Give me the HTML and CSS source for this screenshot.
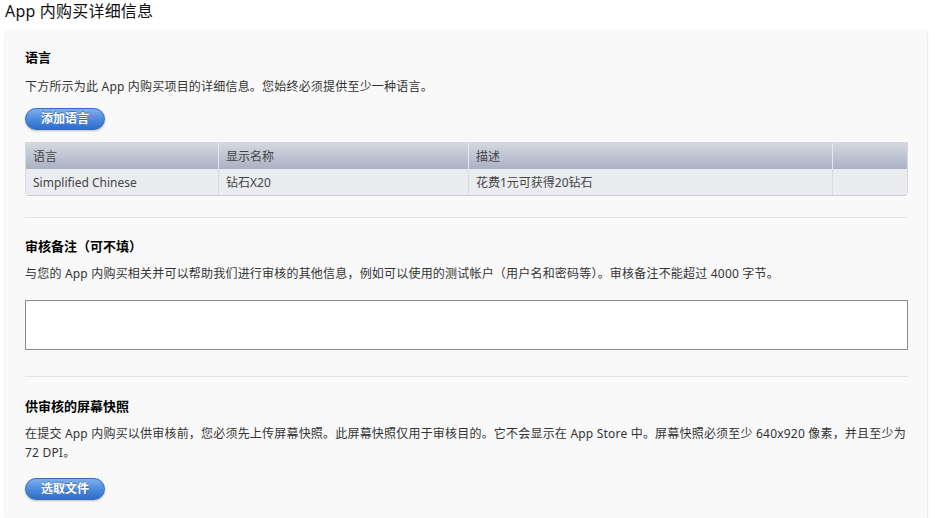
FILE: index.html
```html
<!DOCTYPE html>
<html lang="zh-CN">
<head>
  <meta charset="UTF-8">
  <title>App 内购买详细信息</title>
  <link rel="stylesheet" href="styles.css">
</head>
<body>
  <h1 class="page-title">App 内购买详细信息</h1>
  <div class="panel">
    <div class="section section-lang">
      <h2>语言</h2>
      <p class="desc">下方所示为此 App 内购买项目的详细信息。您始终必须提供至少一种语言。</p>
      <button class="btn">添加语言</button>
      <table class="lang-table">
        <thead>
          <tr>
            <th class="col-lang">语言</th>
            <th class="col-name">显示名称</th>
            <th class="col-desc">描述</th>
            <th class="col-edit"></th>
          </tr>
        </thead>
        <tbody>
          <tr>
            <td>Simplified Chinese</td>
            <td>钻石X20</td>
            <td>花费1元可获得20钻石</td>
            <td></td>
          </tr>
        </tbody>
      </table>
    </div>
    <div class="section section-notes">
      <h2>审核备注（可不填）</h2>
      <p class="desc">与您的 App 内购买相关并可以帮助我们进行审核的其他信息，例如可以使用的测试帐户（用户名和密码等）。审核备注不能超过 4000 字节。</p>
      <textarea class="notes"></textarea>
    </div>
    <div class="section section-shots">
      <h2>供审核的屏幕快照</h2>
      <p class="desc">在提交 App 内购买以供审核前，您必须先上传屏幕快照。此屏幕快照仅用于审核目的。它不会显示在 App Store 中。屏幕快照必须至少 640x920 像素，并且至少为 72 DPI。</p>
      <button class="btn">选取文件</button>
    </div>
  </div>
</body>
</html>
```

FILE: styles.css
```css
body {
  margin: 0;
  height: 518px;
  background: #fff;
  font-family: "Noto Sans", "Noto Sans CJK SC", sans-serif;
  color: #333;
  overflow: hidden;
}
.page-title {
  margin: 0;
  padding: 1px 0 0 5px;
  height: 31px;
  box-sizing: border-box;
  font-size: 16px;
  font-weight: normal;
  line-height: 20px;
  letter-spacing: 0.2px;
  color: #111;
}
.panel {
  margin: 0 8px 0 5px;
  padding: 0 19px 0 20px;
  height: 487px;
  background: #f9f9f9;
  border-radius: 4px 4px 0 0;
  box-shadow: 0 0 2px rgba(0, 0, 0, 0.12), 1px 1px 2px rgba(0, 0, 0, 0.06);
}
.section {
  padding-top: 19px;
  border-bottom: 1px solid #e2e2e2;
}
.section-lang {
  padding-top: 17px;
  padding-bottom: 21px;
}
.section-notes {
  padding-bottom: 26px;
}
.section-shots {
  padding-top: 20px;
  border-bottom: none;
}
h2 {
  margin: 0;
  font-size: 13px;
  line-height: 18px;
  font-weight: bold;
  color: #000;
}
.desc {
  margin: 9px 0 0;
  font-size: 12px;
  line-height: 19px;
  letter-spacing: 0.2px;
  color: #333;
}
.section-lang .desc {
  margin-top: 11px;
}
.btn {
  display: block;
  width: 80px;
  height: 22px;
  margin-top: 12px;
  padding: 0;
  border: 1px solid #3a6cbc;
  border-radius: 11px;
  background: linear-gradient(#7eb0ec, #4a88dc 55%, #2f6ccb);
  box-shadow: 0 1px 2px rgba(0, 0, 0, 0.25);
  color: #fff;
  font-family: inherit;
  font-size: 12px;
  font-weight: bold;
  line-height: 20px;
  text-shadow: 0 -1px 0 rgba(0, 0, 0, 0.3);
}
.section-shots .btn {
  margin-top: 16px;
}
.lang-table {
  width: 100%;
  margin-top: 12px;
  border-collapse: separate;
  border-spacing: 0;
  border: 1px solid #d6d9e0;
  border-bottom-color: #c9ccd6;
  border-radius: 0 0 4px 4px;
  font-size: 12px;
  color: #444;
}
.lang-table th,
.lang-table td {
  height: 26px;
  padding: 0 7px;
  text-align: left;
  font-weight: normal;
  border-right: 1px solid #dcdcdc;
}
.lang-table th:last-child,
.lang-table td:last-child {
  border-right: none;
}
.lang-table th {
  background: linear-gradient(#d3d8e0, #aab1c3);
  border-right-color: #e4e7ec;
}
.lang-table td {
  background: #ebecf0;
}
.col-lang { width: 178px; }
.col-name { width: 235px; }
.col-desc { width: 349px; }
.notes {
  display: block;
  width: 100%;
  height: 50px;
  margin-top: 17px;
  box-sizing: border-box;
  border: 1px solid #8a8a8a;
  background: #fff;
  resize: none;
}
```
